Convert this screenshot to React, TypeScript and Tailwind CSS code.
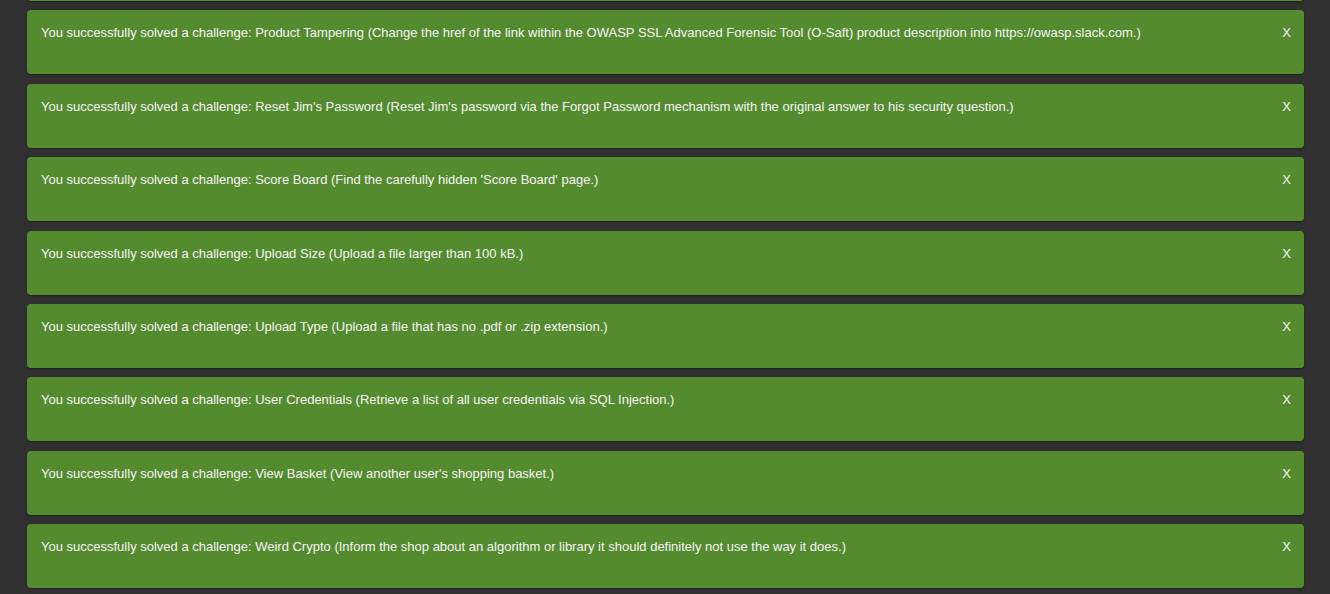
const ITEMS = [
  'You successfully solved a challenge: Product Tampering (Change the href of the link within the OWASP SSL Advanced Forensic Tool (O-Saft) product description into https://owasp.slack.com.)',
  "You successfully solved a challenge: Reset Jim's Password (Reset Jim's password via the Forgot Password mechanism with the original answer to his security question.)",
  "You successfully solved a challenge: Score Board (Find the carefully hidden 'Score Board' page.)",
  'You successfully solved a challenge: Upload Size (Upload a file larger than 100 kB.)',
  'You successfully solved a challenge: Upload Type (Upload a file that has no .pdf or .zip extension.)',
  'You successfully solved a challenge: User Credentials (Retrieve a list of all user credentials via SQL Injection.)',
  "You successfully solved a challenge: View Basket (View another user's shopping basket.)",
  'You successfully solved a challenge: Weird Crypto (Inform the shop about an algorithm or library it should definitely not use the way it does.)',
];

export default function App() {
  return (
    <div className="h-[594px] overflow-hidden bg-[#303030] font-['Liberation_Sans',Arial,sans-serif]">
      <div className="-mt-[63px] ml-[27px] w-[1277px] flex flex-col gap-[9.4px]">
        {/* toast scrolled mostly out of view */}
        <div className="h-[64px] shrink-0 rounded-[4px] bg-[#558b2f] shadow-[0_1px_2px_rgba(0,0,0,0.35)]" />
        {ITEMS.map((text) => (
          <div
            key={text}
            className="h-[64px] shrink-0 rounded-[4px] bg-[#558b2f] shadow-[0_1px_2px_rgba(0,0,0,0.35)] flex items-start justify-between pl-[14px] pr-[13px] pt-[13px] text-[13px] leading-[20px] text-[#f4f4f4]"
          >
            <span>{text}</span>
            <button className="text-[13px] leading-[20px] text-[#f4f4f4]">X</button>
          </div>
        ))}
      </div>
    </div>
  );
}
